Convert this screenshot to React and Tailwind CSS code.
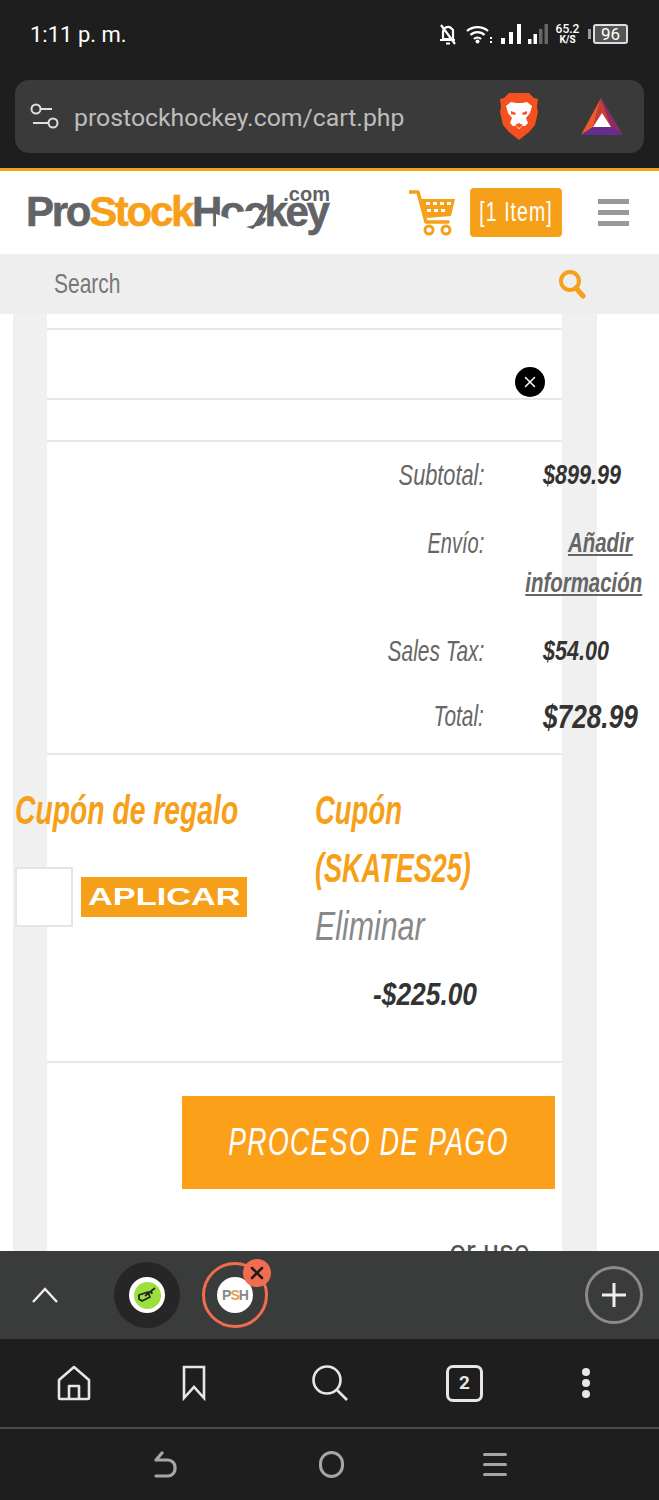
import React from 'react';
import { X } from 'lucide-react';

const sans = "font-['Liberation_Sans',sans-serif]";

// no condensed font here, so narrow text is squeezed with scale-x
const Narrow = ({ className, children }) => (
  <span className={`inline-block whitespace-nowrap ${className}`}>{children}</span>
);

const TotalRow = ({ label, labelClass, children, className }) => (
  <div className={`flex ${className}`}>
    <div className="w-[437px] shrink-0 flex justify-end text-[#666] italic text-[29px] leading-[32px]">
      <Narrow className={`origin-right ${labelClass}`}>{label}</Narrow>
    </div>
    <div className="flex-1 min-w-0 pl-[59px]">{children}</div>
  </div>
);

const StatusIcons = () => (
  <div className="flex items-center text-white">
    <svg width="18" height="21" viewBox="0 0 18 21" fill="none" stroke="white" strokeWidth="2.2">
      <path d="M4 15V8a5 5 0 0 1 8-4l2 2v9zM1 16h15M7 19.5h4M2 1l14 19" />
    </svg>
    <svg className="ml-[9px]" width="26" height="20" viewBox="0 0 26 20" fill="none" stroke="white" strokeWidth="2.3">
      <path d="M1 7a16 16 0 0 1 21 0M4.500 11a10 10 0 0 1 14 0M8 15a5 5 0 0 1 7 0" />
      <circle cx="11.500" cy="17.500" r="2" fill="white" stroke="none" />
      <path d="M25 13v2M25 17v2" strokeWidth="2" />
    </svg>
    <svg className="ml-[9px]" width="20" height="20" viewBox="0 0 20 20" fill="white">
      <rect x="0" y="14" width="4" height="6" />
      <rect x="8" y="8" width="4" height="12" />
      <rect x="16" y="0" width="4" height="20" />
    </svg>
    <svg className="ml-[7px]" width="20" height="20" viewBox="0 0 20 20">
      <rect x="0" y="15" width="3.500" height="5" fill="white" />
      <rect x="5.500" y="10" width="3.500" height="10" fill="white" />
      <rect x="11" y="5" width="3.500" height="15" fill="#666" />
      <rect x="16.500" y="0" width="3.500" height="20" fill="#666" />
    </svg>
    <div className="ml-[8px] w-[23px] flex flex-col items-center font-['Roboto',sans-serif] font-medium text-[12px] leading-[11px]">
      <span>65.2</span>
      <span className="text-[10px] leading-[10px] font-bold">K/S</span>
    </div>
    <div className="ml-[9px] flex items-center">
      <div className="w-[3px] h-[10px] bg-[#999] mr-[2px]" />
      <div className="w-[35px] h-[20px] border-2 border-[#ddd] rounded-[3px] bg-[#555] flex items-center justify-center text-[17px] leading-none font-['Roboto',sans-serif]">96</div>
    </div>
  </div>
);

const BraveLogo = () => (
  <svg className="ml-auto" width="40" height="47" viewBox="0 0 40 47">
    <path d="M10 0h20l5 5 4 1-1 8 1 5-3 13-6 7-10 8-10-8-6-7-3-13 1-5-1-8 4-1z" fill="#f4511e" />
    <path d="M12 9l5 1h6l5-1 5 4-2 7-4 5 2 5-3 3-3 0-3 3-3-3-3 0-3-3 2-5-4-5-2-7z" fill="#fff" />
    <path d="M12 18l5 2-1 2-4-1zM28 18l-5 2 1 2 4-1zM16 32l4-2 4 2-4 3z" fill="#f4511e" />
  </svg>
);

const BatLogo = () => (
  <svg className="ml-[42px]" width="42" height="37" viewBox="0 0 42 37">
    <path d="M20 0L0 37l12-8z" fill="#ef5a2b" />
    <path d="M20 0l10 29 12 8z" fill="#8f2a6b" />
    <path d="M20 0L12 29h18z" fill="#c93a3a" />
    <path d="M0 37h42l-12-8H12z" fill="#662d91" />
    <path d="M21 15l9 14H12z" fill="#fff" />
  </svg>
);

const TopBars = () => (
  <div className="bg-[#1e1e1e]">
    <div className="h-[68px] pl-[30px] pr-[31px] flex items-center justify-between">
      <span className="text-white text-[22px] font-['Roboto',sans-serif]">1:11 p. m.</span>
      <StatusIcons />
    </div>
    <div className="mx-[15px] mt-[12px] h-[73px] rounded-[14px] bg-[#3a3a3a] flex items-center pl-[15px] pr-[21px]">
      <svg width="30" height="30" viewBox="0 0 30 30" fill="none" stroke="#e0e0e0" strokeWidth="2">
        <circle cx="6" cy="7" r="4.500" />
        <path d="M11 7h11M3 21h15" />
        <circle cx="23" cy="21" r="4.500" />
      </svg>
      <span className="ml-[14px] mt-[2px] text-[24.8px] text-[#bdbdbd] font-['Roboto',sans-serif]">prostockhockey.com/cart.php</span>
      <BraveLogo />
      <BatLogo />
    </div>
    <div className="h-[15px]" />
  </div>
);

const CartIcon = () => (
  <svg className="ml-[80px]" width="47" height="47" viewBox="0 0 47 47" fill="none">
    <path d="M1 3h8l8 30h22" stroke="#f6a01a" strokeWidth="3.500" strokeLinecap="round" strokeLinejoin="round" />
    <path d="M11 10h35l-4 17-24 2z" fill="#f6a01a" />
    <path d="M17 13h4v3h-4zM24 13h4v3h-4zM31 13h4v3h-4zM38 13h4v3h-4zM18 20h4v3h-4zM25 20h4v3h-4zM32 20h4v3h-4z" fill="#fff" />
    <circle cx="20" cy="41" r="4" stroke="#f6a01a" strokeWidth="3" />
    <circle cx="37" cy="41" r="4" stroke="#f6a01a" strokeWidth="3" />
  </svg>
);

const SiteHeader = () => (
  <div className="border-t-[3px] border-[#f6a01a]">
    <div className="h-[83px] bg-white flex items-center pl-[26px] pr-[30px]">
      <div className={`relative w-[303px] h-[64px] font-bold text-[42px] leading-none tracking-[-2.300px] [-webkit-text-stroke:0.6px] ${sans}`}>
        <div className="absolute left-0 top-[10px] whitespace-nowrap">
          <span className="text-[#626366]">Pro</span>
          <span className="text-[#f6a01a]">Stock</span>
          <span className="text-[#626366]">Hockey</span>
        </div>
        <svg className="absolute left-[190px] top-[20px]" width="56" height="30" viewBox="0 0 56 30">
          <path d="M0 13l16 6 6-8 26-2-14 20H0z" fill="#fff" />
          <path d="M30 26l8-2 10-18 5-6-4 12-6 10-6 6z" fill="#626366" />
        </svg>
        <div className="absolute -right-[1px] top-[3px] text-[#626366] text-[20px] tracking-normal [-webkit-text-stroke:0px]">.com</div>
      </div>
      <CartIcon />
      <div className="ml-[14px] w-[92px] h-[49px] rounded-[4px] bg-[#f6a01a] text-white flex items-center justify-center text-[27px] tracking-[1.500px]">
        <Narrow className={`origin-center scale-x-[0.72] ${sans}`}>[1 Item]</Narrow>
      </div>
      <div className="ml-auto flex flex-col gap-[6px]">
        <div className="w-[31px] h-[5px] bg-[#999]" />
        <div className="w-[31px] h-[5px] bg-[#999]" />
        <div className="w-[31px] h-[5px] bg-[#999]" />
      </div>
    </div>
    <div className="h-[60px] bg-[#eeeeee] flex items-center justify-between pl-[54px] pr-[73px]">
      <Narrow className={`text-[#777] text-[28px] origin-left scale-x-[0.75] ${sans}`}>Search</Narrow>
      <svg width="28" height="30" viewBox="0 0 28 30" fill="none" stroke="#f6a01a" strokeWidth="4">
        <circle cx="12" cy="12" r="9" />
        <path d="M18 19l7 8" strokeLinecap="round" strokeWidth="5" />
      </svg>
    </div>
  </div>
);

const Totals = () => (
  <div className="h-[313px] border-t-2 border-[#e8e8e8] pt-[17px]">
    <div className="w-[595px]">
      <TotalRow label="Subtotal:" labelClass="scale-x-[0.75]">
        <Narrow className="origin-left scale-x-[0.77] font-bold italic text-[#333] text-[28px] leading-[32px]">$899.99</Narrow>
      </TotalRow>
      <TotalRow label="Envío:" labelClass="scale-x-[0.69]" className="mt-[36px]">
        <div className="flex flex-col items-end -mt-[4px] mb-[4px] font-bold italic text-[#666] text-[28px] leading-[40px] underline">
          <Narrow className="origin-right scale-x-[0.73] mr-[9px]">Añadir</Narrow>
          <Narrow className="origin-right scale-x-[0.73]">información</Narrow>
        </div>
      </TotalRow>
      <TotalRow label="Sales Tax:" labelClass="scale-x-[0.72]" className="mt-[28px]">
        <Narrow className="origin-left scale-x-[0.77] font-bold italic text-[#333] text-[28px] leading-[32px]">$54.00</Narrow>
      </TotalRow>
      <TotalRow label="Total:" labelClass="scale-x-[0.72]" className="mt-[33px]">
        <Narrow className="origin-left scale-x-[0.795] font-bold italic text-[#333] text-[33px] leading-[34px]">$728.99</Narrow>
      </TotalRow>
    </div>
  </div>
);

const Coupons = () => (
  <div className="h-[308px] border-t-2 border-[#e8e8e8]">
    <div className="flex -ml-[32px]">
      <div className="w-[300px] shrink-0 pt-[30px]">
        <Narrow className="text-[#f6a01a] italic font-bold text-[41px] leading-[50px] origin-left scale-x-[0.69]">Cupón de regalo</Narrow>
        <div className="flex items-center mt-[32px]">
          <div className="w-[58px] h-[60px] bg-white border-2 border-[#e4e4e4]" />
          <div className="ml-[8px] w-[166px] h-[40px] bg-[#f6a01a] text-white flex items-center justify-center font-bold text-[24px]">
            <Narrow className={`origin-center scale-x-[1.43] ${sans}`}>APLICAR</Narrow>
          </div>
        </div>
      </div>
      <div className="flex-1 pt-[26px] flex flex-col items-start">
        <Narrow className="text-[#f6a01a] italic font-bold text-[41px] leading-[58px] origin-left scale-x-[0.67]">Cupón</Narrow>
        <Narrow className="text-[#f6a01a] italic font-bold text-[41px] leading-[58px] origin-left scale-x-[0.66]">(SKATES25)</Narrow>
        <Narrow className="text-[#888] italic text-[41px] leading-[58px] origin-left scale-x-[0.74]">Eliminar</Narrow>
        <Narrow className="text-[#333] italic font-bold text-[31px] leading-[40px] mt-[20px] ml-[58px] origin-left scale-x-[0.85]">-$225.00</Narrow>
      </div>
    </div>
  </div>
);

const Cart = () => (
  <div className={`flex-1 min-h-0 overflow-hidden bg-white pl-[13px] ${sans}`}>
    <div className="w-[584px] h-full bg-[#f0f0f0] px-[34px]">
      <div className="w-[515px] h-full bg-white">
        <div className="h-[14px]" />
        <div className="h-[70px] border-t-2 border-[#e8e8e8] flex items-end justify-end pr-[17px]">
          <div className="w-[30px] h-[30px] mb-[1px] rounded-full bg-black flex items-center justify-center">
            <X className="w-[18px] h-[18px] text-white" strokeWidth={2} />
          </div>
        </div>
        <div className="h-[42px] border-t-2 border-[#e8e8e8]" />
        <Totals />
        <Coupons />
        <div className="border-t-2 border-[#e8e8e8] pt-[33px] pl-[135px]">
          <div className="w-[373px] h-[93px] bg-[#fca019] text-white italic text-[38px] tracking-[2px] flex items-center justify-center">
            <Narrow className="origin-center scale-x-[0.7]">PROCESO DE PAGO</Narrow>
          </div>
        </div>
        <div className="mt-[46px] text-center pl-[370px] whitespace-nowrap text-[#555] text-[29px] font-['Roboto',sans-serif] leading-[32px]">or use</div>
      </div>
    </div>
  </div>
);

const BottomBars = () => (
  <div className="bg-[#1e1e1e]">
    <div className="h-[88px] bg-[#3a3b3b] flex items-center pl-[32px] pr-[16px]">
      <svg width="26" height="16" viewBox="0 0 26 16" fill="none" stroke="#eee" strokeWidth="2.400">
        <path d="M1 15L13 2l12 13" />
      </svg>
      <div className="ml-[56px] w-[66px] h-[66px] rounded-full bg-[#262626] flex items-center justify-center">
        <div className="w-[36px] h-[36px] rounded-full bg-white flex items-center justify-center">
          <div className="w-[27px] h-[27px] rounded-full bg-[#9be03c] flex items-center justify-center">
            <svg width="20" height="16" viewBox="0 0 20 16" fill="none" stroke="#222" strokeWidth="1.800" strokeLinejoin="round">
              <path d="M2 8l9-3 2 5-8 4-3-2zM8 9l10-8M14 3l1 4" />
            </svg>
          </div>
        </div>
      </div>
      <div className="relative ml-[22px] w-[66px] h-[66px] rounded-full border-[3px] border-[#f26d50] flex items-center justify-center">
        <div className={`w-[36px] h-[36px] rounded-full bg-white flex items-center justify-center text-[14px] font-bold text-[#888] tracking-[-1px] ${sans}`}>
          P<span className="text-[#e8a04a]">S</span>H
        </div>
        <div className="absolute -top-[6px] -right-[6px] w-[28px] h-[28px] rounded-full bg-[#f26d50] flex items-center justify-center">
          <X className="w-[20px] h-[20px] text-[#1a1a1a]" strokeWidth={3} />
        </div>
      </div>
      <div className="ml-auto w-[58px] h-[58px] rounded-full border-[3px] border-[#8a8a8a] flex items-center justify-center">
        <svg width="28" height="28" viewBox="0 0 28 28" stroke="#eee" strokeWidth="3">
          <path d="M14 2v24M2 14h24" />
        </svg>
      </div>
    </div>
    <div className="h-[90px] flex items-center pl-[56px] border-b-2 border-[#4a4a4a]">
      <svg width="36" height="36" viewBox="0 0 36 36" fill="none" stroke="#e6e6e6" strokeWidth="2.600" strokeLinejoin="round">
        <path d="M3 15L18 2l15 13v18a1 1 0 0 1-1 1H4a1 1 0 0 1-1-1z" />
        <path d="M13 34V21h10v13" />
      </svg>
      <svg className="ml-[90px]" width="24" height="36" viewBox="0 0 24 36" fill="none" stroke="#e6e6e6" strokeWidth="2.600">
        <path d="M2 2h20v31L12 22 2 33z" />
      </svg>
      <svg className="ml-[105px]" width="38" height="38" viewBox="0 0 38 38" fill="none" stroke="#e6e6e6" strokeWidth="2.600">
        <circle cx="16" cy="16" r="13.500" />
        <path d="M26 26l10 10" />
      </svg>
      <div className="ml-[97px] w-[37px] h-[37px] rounded-[7px] border-[3px] border-[#e6e6e6] flex items-center justify-center text-[#e6e6e6] text-[19px] font-bold font-['Roboto',sans-serif]">2</div>
      <div className="ml-[99px] flex flex-col gap-[3px]">
        <div className="w-[8px] h-[8px] rounded-full bg-[#e6e6e6]" />
        <div className="w-[8px] h-[8px] rounded-full bg-[#e6e6e6]" />
        <div className="w-[8px] h-[8px] rounded-full bg-[#e6e6e6]" />
      </div>
    </div>
    <div className="h-[71px] flex items-center pl-[153px] pr-[152px] justify-between">
      <svg width="26" height="28" viewBox="0 0 26 28" fill="none" stroke="#a6a6a6" strokeWidth="3.200" strokeLinecap="round">
        <path d="M3 25h12a7 7 0 0 0 7-7v-2a7 7 0 0 0-7-7H3M9 2L3 9" />
      </svg>
      <div className="w-[25px] h-[27px] rounded-full border-[3px] border-[#a6a6a6]" />
      <div className="flex flex-col gap-[7px]">
        <div className="w-[24px] h-[3px] rounded-full bg-[#a6a6a6]" />
        <div className="w-[24px] h-[3px] rounded-full bg-[#a6a6a6]" />
        <div className="w-[24px] h-[3px] rounded-full bg-[#a6a6a6]" />
      </div>
    </div>
  </div>
);

export default function App() {
  return (
    <div className="w-[659px] h-[1500px] flex flex-col overflow-hidden">
      <TopBars />
      <SiteHeader />
      <Cart />
      <BottomBars />
    </div>
  );
}
